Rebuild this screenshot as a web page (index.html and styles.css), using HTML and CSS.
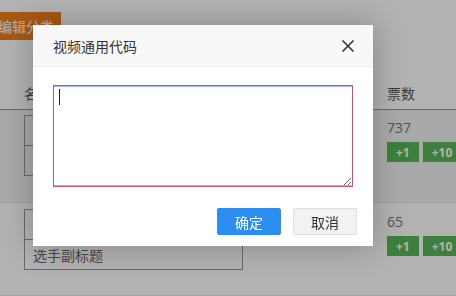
FILE: index.html
```html
<!DOCTYPE html>
<html lang="zh-CN">
<head>
    <meta charset="UTF-8">
    <title>视频通用代码</title>
    <link rel="stylesheet" href="styles.css">
</head>
<body>
    <div class="page">
        <button class="btn-cat">编辑分类</button>

        <div class="list">
            <div class="list-head">
                <div class="col-name">名称</div>
                <div class="col-votes">票数</div>
            </div>
            <div class="list-row hover">
                <div class="col-name">
                    <input class="field" type="text" value="选手标题">
                    <input class="field" type="text" value="选手副标题">
                </div>
                <div class="col-votes">
                    <div class="count">737</div>
                    <div class="vote-btns">
                        <button class="btn-vote">+1</button>
                        <button class="btn-vote">+10</button>
                    </div>
                </div>
            </div>
            <div class="list-row">
                <div class="col-name">
                    <input class="field" type="text" value="选手标题">
                    <input class="field" type="text" value="选手副标题">
                </div>
                <div class="col-votes">
                    <div class="count">65</div>
                    <div class="vote-btns">
                        <button class="btn-vote">+1</button>
                        <button class="btn-vote">+10</button>
                    </div>
                </div>
            </div>
        </div>
    </div>

    <div class="mask"></div>

    <div class="dialog">
        <div class="dialog-head">
            <span class="dialog-title">视频通用代码</span>
            <span class="dialog-close">
                <svg width="14" height="14" viewBox="0 0 14 14">
                    <path d="M1.5 1.5 L12.5 12.5 M12.5 1.5 L1.5 12.5" stroke="#333" stroke-width="1.6" fill="none"/>
                </svg>
            </span>
        </div>
        <div class="dialog-body">
            <div class="code-wrap">
                <textarea class="code-input" autofocus></textarea>
            </div>
        </div>
        <div class="dialog-foot">
            <button class="btn btn-ok">确定</button>
            <button class="btn btn-cancel">取消</button>
        </div>
    </div>
</body>
</html>
```

FILE: styles.css
```css
html, body {
    margin: 0;
    height: 100%;
    overflow: hidden;
}

body {
    font-family: "Open Sans", "Noto Sans CJK SC", sans-serif;
    font-size: 14px;
    color: #555;
    background: #fff;
}

.page {
    padding-top: 12px;
    width: 520px;
}

.btn-cat {
    display: block;
    margin-left: -9px;
    height: 28px;
    padding: 0 7px;
    border: none;
    background: #f27f1b;
    color: #fff;
    font-family: inherit;
    font-size: 14px;
}

.list {
    margin-top: 37px;
}

.list-head {
    display: flex;
    height: 32px;
    align-items: center;
    border-bottom: 1px solid #999;
}

.col-name {
    width: 363px;
    padding-left: 24px;
}

.col-votes {
    flex: 1;
}

.list-row {
    display: flex;
    height: 93px;
    box-sizing: border-box;
    padding-top: 5px;
    border-bottom: 1px solid #e8e8e8;
}

.list-row.hover {
    background: #f3f3f3;
}

.list-row + .list-row {
    padding-top: 6px;
}

.list-row .col-name {
    display: flex;
    flex-direction: column;
}

.field {
    width: 219px;
    height: 31px;
    box-sizing: border-box;
    margin: 0;
    padding: 0 8px;
    border: 1px solid #999;
    background: transparent;
    color: #666;
    font-family: inherit;
    font-size: 14px;
}

.field + .field {
    margin-top: -1px;
}

.count {
    margin-top: 4px;
    line-height: 18px;
    color: #777;
}

.vote-btns {
    display: flex;
    gap: 4px;
    margin-top: 5px;
}

.btn-vote {
    height: 20px;
    padding: 0 9px;
    border: none;
    background: #58b858;
    color: #fff;
    font-family: inherit;
    font-size: 12px;
    font-weight: bold;
}

.mask {
    position: fixed;
    inset: 0;
    background: rgba(0, 0, 0, 0.3);
}

.dialog {
    position: absolute;
    left: 33px;
    top: 25px;
    width: 340px;
    background: #fff;
    box-shadow: 0 0 30px rgba(0, 0, 0, 0.25);
}

.dialog-head {
    display: flex;
    align-items: center;
    justify-content: space-between;
    height: 41px;
    padding: 0 18px 0 20px;
    background: #f8f8f8;
    border-bottom: 1px solid #eee;
}

.dialog-title {
    color: #333;
    font-size: 14px;
}

.dialog-close {
    display: flex;
}

.dialog-body {
    padding: 18px 20px 0;
}

.code-wrap {
    position: relative;
}

/* caret of the focused textarea */
.code-wrap::after {
    content: "";
    position: absolute;
    left: 6px;
    top: 4px;
    width: 1px;
    height: 16px;
    background: #222;
}

.code-input {
    display: block;
    width: 300px;
    height: 102px;
    box-sizing: border-box;
    margin: 0;
    padding: 3px 6px;
    border: 1px solid #c0557a;
    box-shadow: inset 0 1px 0 #a9b8ec, inset 0 -1px 0 #a9b8ec;
    outline: none;
    resize: both;
    font-family: inherit;
    font-size: 14px;
    caret-color: transparent;
}

.dialog-foot {
    display: flex;
    justify-content: flex-end;
    gap: 12px;
    padding: 21px 16px 11px;
}

.btn {
    width: 64px;
    height: 27px;
    border-radius: 2px;
    font-family: inherit;
    font-size: 14px;
}

.btn-ok {
    border: 1px solid #2d8cf0;
    background: #2d8cf0;
    color: #fff;
}

.btn-cancel {
    border: 1px solid #dedede;
    background: #f2f2f2;
    color: #333;
}
```
